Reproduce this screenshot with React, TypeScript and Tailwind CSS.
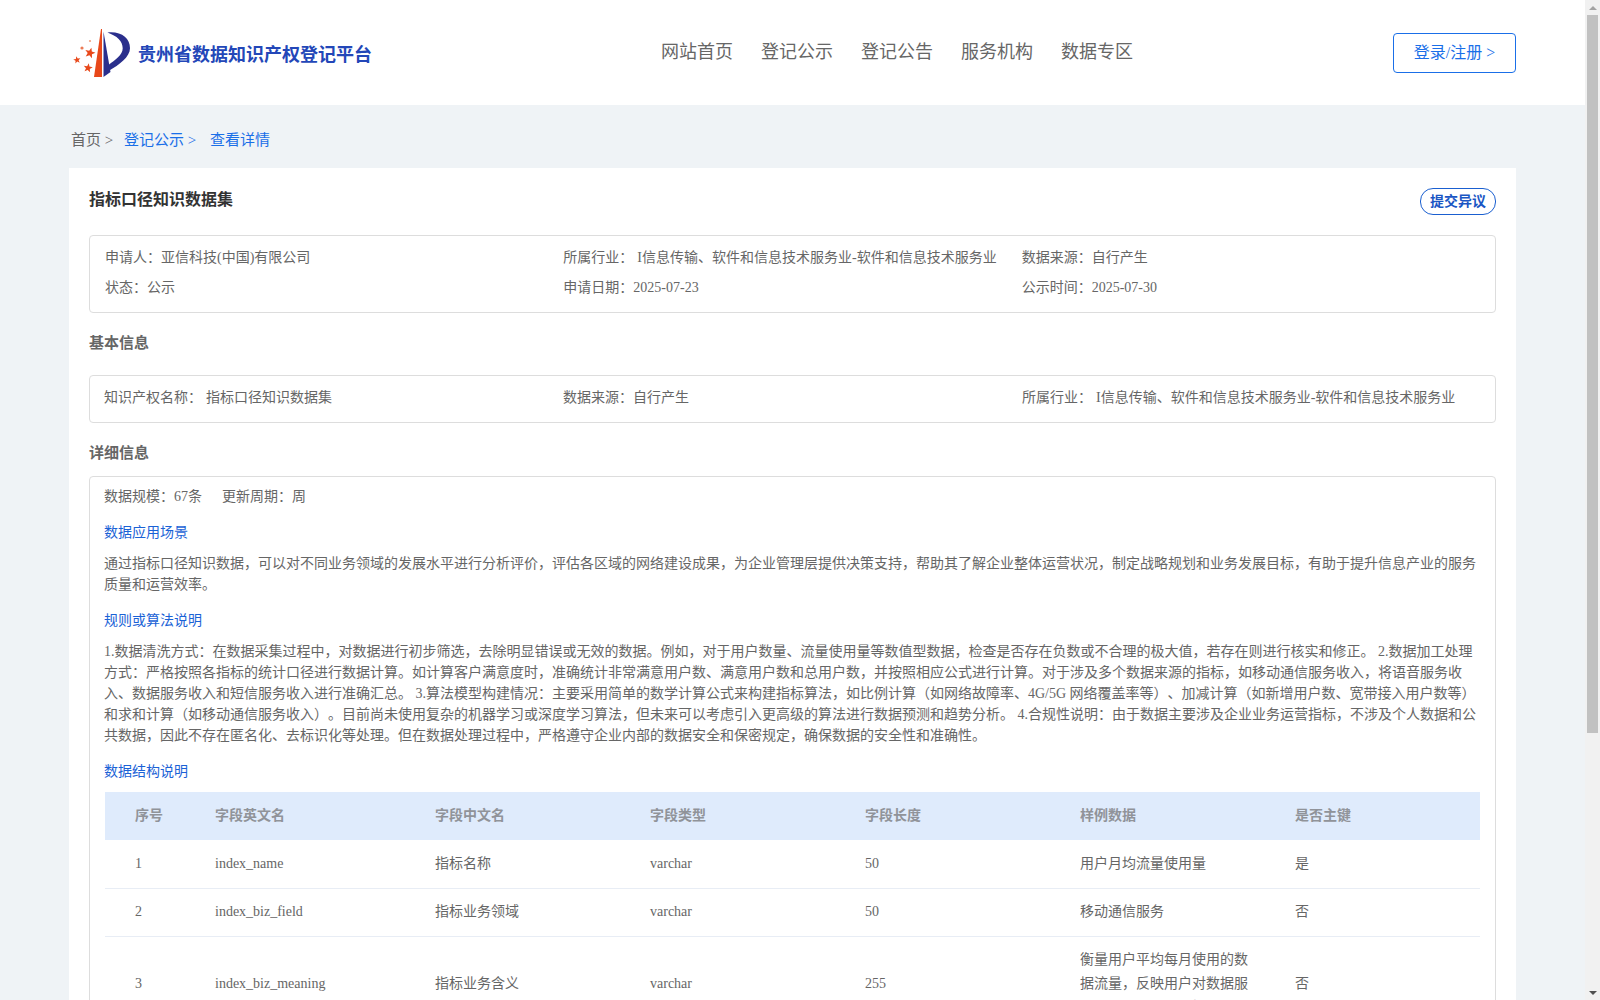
const serif = "[font-family:'Liberation_Serif','Noto_Sans_CJK_SC',serif]";

function Star({ cx, cy, r, rot = 0 }: { cx: number; cy: number; r: number; rot?: number }) {
  const pts = Array.from({ length: 10 }, (_, i) => {
    const a = ((i * 36 - 90 + rot) * Math.PI) / 180;
    const d = i % 2 ? r * 0.42 : r;
    return `${(cx + d * Math.cos(a)).toFixed(2)},${(cy + d * Math.sin(a)).toFixed(2)}`;
  }).join(" ");
  return <polygon points={pts} fill="#e8481a" />;
}

function Logo() {
  return (
    <svg width="60" height="52" viewBox="0 0 60 52" className="shrink-0">
      <polygon points="30,2 31,2 31,50 23,50" fill="#e8481a" />
      <polygon points="32.5,4.5 39.5,45 32.5,50" fill="#2a2f8c" />
      <path d="M36.5 5.5 C50 4 59 11 59 21.3 C59 30 48 38 38.3 43.5 L37.5 38 C44 33 51.7 28 51.7 21.3 C51.7 14 46 9 36.5 5.5 Z" fill="#2a2f8c" />
      <Star cx={19} cy={26} r={5.5} rot={15} />
      <Star cx={6} cy={33} r={3.8} rot={-10} />
      <Star cx={17} cy={41} r={4.8} rot={10} />
      <circle cx={11} cy={21} r={1.6} fill="#ec7a55" />
      <circle cx={19} cy={14} r={1.1} fill="#f0a080" />
    </svg>
  );
}

function Header() {
  const nav = ["网站首页", "登记公示", "登记公告", "服务机构", "数据专区"];
  return (
    <header className="flex h-[105px] items-center bg-white pl-[71px] pr-[69px]">
      <div className="flex w-[300px] shrink-0 items-center gap-[7px]">
        <Logo />
        <span className="mt-[4px] text-[18px] font-bold leading-[24px] text-[#2347b8] whitespace-nowrap">贵州省数据知识产权登记平台</span>
      </div>
      <nav className="ml-[290px] -mt-[1px] flex gap-[28px] text-[18px] leading-[24px] text-[#666666]">
        {nav.map((n) => (
          <span key={n}>{n}</span>
        ))}
      </nav>
      <button className="ml-auto h-[40px] w-[123px] rounded-[4px] border border-[#1a6fe8] text-[16px] text-[#1a6fe8]">登录/注册 &gt;</button>
    </header>
  );
}

function InfoCell({ label, value, wide }: { label: string; value: string; wide?: boolean }) {
  return (
    <div className="whitespace-nowrap">
      {label}
      {wide ? <span className="ml-[4px]">{value}</span> : value}
    </div>
  );
}

const th = "text-left font-bold text-[#909399]";
const td = "text-[#666666]";

function FieldTable() {
  const rows = [
    { no: "1", en: "index_name", cn: "指标名称", type: "varchar", len: "50", sample: "用户月均流量使用量", pk: "是" },
    { no: "2", en: "index_biz_field", cn: "指标业务领域", type: "varchar", len: "50", sample: "移动通信服务", pk: "否" },
    { no: "3", en: "index_biz_meaning", cn: "指标业务含义", type: "varchar", len: "255", sample: "衡量用户平均每月使用的数据流量，反映用户对数据服务的需求和使用习惯", pk: "否" },
  ];
  return (
    <table className="mt-[10px] w-full table-fixed border-collapse text-[14px] leading-[24px]">
      <colgroup>
        <col className="w-[110px]" />
        <col className="w-[220px]" />
        <col className="w-[215px]" />
        <col className="w-[215px]" />
        <col className="w-[215px]" />
        <col className="w-[215px]" />
        <col className="w-[185px]" />
      </colgroup>
      <thead>
        <tr className="h-[48px] bg-[#dfebfc]">
          <th className={`${th} pl-[30px]`}>序号</th>
          <th className={th}>字段英文名</th>
          <th className={th}>字段中文名</th>
          <th className={th}>字段类型</th>
          <th className={th}>字段长度</th>
          <th className={th}>样例数据</th>
          <th className={th}>是否主键</th>
        </tr>
      </thead>
      <tbody>
        {rows.map((r) => (
          <tr key={r.no} className="h-[48px] border-b border-[#e8edf5]">
            <td className={`${td} pl-[30px]`}>{r.no}</td>
            <td className={td}>{r.en}</td>
            <td className={td}>{r.cn}</td>
            <td className={td}>{r.type}</td>
            <td className={td}>{r.len}</td>
            <td className={`${td} py-[11px] pr-[40px]`}>{r.sample}</td>
            <td className={td}>{r.pk}</td>
          </tr>
        ))}
      </tbody>
    </table>
  );
}

function Scrollbar() {
  return (
    <div className="flex h-full w-[15px] shrink-0 flex-col bg-[#f1f1f1]">
      <div className="flex h-[15px] shrink-0 items-center justify-center">
        <div className="h-0 w-0 border-x-[4px] border-b-[4px] border-x-transparent border-b-[#a3a3a3]" />
      </div>
      <div className="mx-[2px] h-[718px] shrink-0 bg-[#c1c1c1]" />
      <div className="flex-1" />
      <div className="flex h-[15px] shrink-0 items-center justify-center">
        <div className="h-0 w-0 border-x-[4px] border-t-[4px] border-x-transparent border-t-[#505050]" />
      </div>
    </div>
  );
}

export default function App() {
  return (
    <div lang="zh-CN" className={`flex h-screen overflow-hidden bg-[#eff3f6] text-[14px] text-[#666666] [text-spacing-trim:space-all] ${serif}`}>
      <div className="min-w-0 flex-1">
        <Header />
        <main className="px-[69px]">
          <div className="flex h-[63px] pl-[2px] pt-[23px] text-[15px] leading-[24px]">
            <span className="w-[53px]">首页 &gt;</span>
            <span className="w-[86px] text-[#1a6fe8]">登记公示 &gt;</span>
            <span className="text-[#1a6fe8]">查看详情</span>
          </div>
          <div className="bg-white px-[20px] pt-[20px]">
            <div className="flex h-[47px] items-start justify-between">
              <h1 className="text-[16px] font-bold leading-[24px] text-[#333333]">指标口径知识数据集</h1>
              <button className="h-[27px] w-[76px] rounded-[13px] border border-[#1a5fd0] text-[14px] font-bold leading-[24px] text-[#1a56c4]">提交异议</button>
            </div>

            <div className="h-[78px] rounded-[4px] border border-[#dddddd] pl-[15px] pr-[15px] pt-[7px] leading-[30px]">
              <div className="grid grid-cols-3">
                <InfoCell label="申请人：" value="亚信科技(中国)有限公司" />
                <InfoCell label="所属行业：" value="I信息传输、软件和信息技术服务业-软件和信息技术服务业" wide />
                <InfoCell label="数据来源：" value="自行产生" />
                <InfoCell label="状态：" value="公示" />
                <InfoCell label="申请日期：" value="2025-07-23" />
                <InfoCell label="公示时间：" value="2025-07-30" />
              </div>
            </div>

            <h2 className="mt-[19px] text-[15px] font-bold leading-[22px]">基本信息</h2>

            <div className="mt-[21px] h-[48px] rounded-[4px] border border-[#dddddd] pl-[14px] pr-[16px] pt-[7px] leading-[30px]">
              <div className="grid grid-cols-[459px_459px_1fr]">
                <InfoCell label="知识产权名称：" value="指标口径知识数据集" wide />
                <InfoCell label="数据来源：" value="自行产生" />
                <InfoCell label="所属行业：" value="I信息传输、软件和信息技术服务业-软件和信息技术服务业" wide />
              </div>
            </div>

            <h2 className="mt-[19px] text-[15px] font-bold leading-[22px]">详细信息</h2>

            <div className="mt-[12px] rounded-[4px] border border-[#dddddd] pl-[14px] pr-[15px] pt-[9px] leading-[21px]">
              <div className="flex gap-[20px]">
                <span>数据规模：67条</span>
                <span>更新周期：周</span>
              </div>
              <h3 className="mt-[15px] text-[#1a62d6]">数据应用场景</h3>
              <p className="mt-[10px]">
                通过指标口径知识数据，可以对不同业务领域的发展水平进行分析评价，评估各区域的网络建设成果，为企业管理层提供决策支持，帮助其了解企业整体运营状况，制定战略规划和业务发展目标，有助于提升信息产业的服务质量和运营效率。
              </p>
              <h3 className="mt-[15px] text-[#1a62d6]">规则或算法说明</h3>
              <p className="mt-[10px]">
                1.数据清洗方式：在数据采集过程中，对数据进行初步筛选，去除明显错误或无效的数据。例如，对于用户数量、流量使用量等数值型数据，检查是否存在负数或不合理的极大值，若存在则进行核实和修正。 2.数据加工处理方式：严格按照各指标的统计口径进行数据计算。如计算客户满意度时，准确统计非常满意用户数、满意用户数和总用户数，并按照相应公式进行计算。对于涉及多个数据来源的指标，如移动通信服务收入，将语音服务收入、数据服务收入和短信服务收入进行准确汇总。 3.算法模型构建情况：主要采用简单的数学计算公式来构建指标算法，如比例计算（如网络故障率、4G/5G 网络覆盖率等）、加减计算（如新增用户数、宽带接入用户数等）和求和计算（如移动通信服务收入）。目前尚未使用复杂的机器学习或深度学习算法，但未来可以考虑引入更高级的算法进行数据预测和趋势分析。 4.合规性说明：由于数据主要涉及企业业务运营指标，不涉及个人数据和公共数据，因此不存在匿名化、去标识化等处理。但在数据处理过程中，严格遵守企业内部的数据安全和保密规定，确保数据的安全性和准确性。
              </p>
              <h3 className="mt-[15px] text-[#1a62d6]">数据结构说明</h3>
              <div className="pl-[1px]">
                <FieldTable />
              </div>
            </div>
          </div>
        </main>
      </div>
      <Scrollbar />
    </div>
  );
}
